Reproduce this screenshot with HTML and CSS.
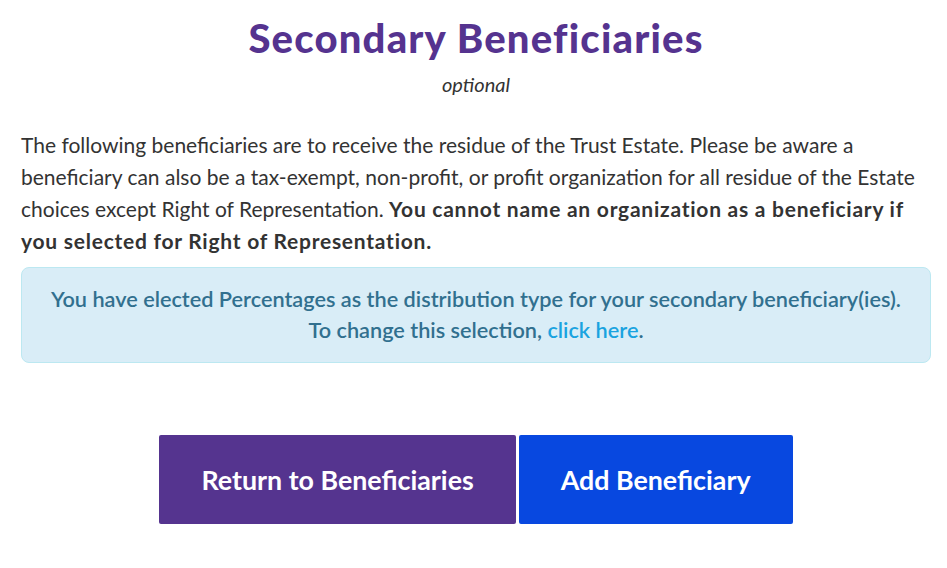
FILE: index.html
```html
<!DOCTYPE html>
<html lang="en">
<head>
  <meta charset="UTF-8" />
  <title>Secondary Beneficiaries</title>
  <link rel="stylesheet" href="styles.css">
</head>
<body>
  <div class="page">
    <h1 class="title">Secondary Beneficiaries</h1>
    <p class="subtitle">optional</p>

    <p class="intro">
      The following beneficiaries are to receive the residue of the Trust Estate. Please be aware a
      beneficiary can also be a tax-exempt, non-profit, or profit organization for all residue of the Estate
      choices except Right of Representation. <strong>You cannot name an organization as a beneficiary if
      you selected for Right of Representation.</strong>
    </p>

    <div class="alert">
      You have elected Percentages as the distribution type for your secondary beneficiary(ies).<br>
      To change this selection, <a href="#">click here</a>.
    </div>

    <div class="actions">
      <button class="btn btn-return">Return to Beneficiaries</button>
      <button class="btn btn-add">Add Beneficiary</button>
    </div>
  </div>
</body>
</html>
```

FILE: styles.css
```css
* {
  box-sizing: border-box;
}

body {
  margin: 0;
  background: #fff;
  color: #333;
  font-family: "Lato", "Liberation Sans", sans-serif;
}

.page {
  width: 910px;
  margin: 0 0 0 21px;
  padding-top: 14px;
}

.title {
  margin: 0;
  text-align: center;
  font-size: 40px;
  font-weight: 900;
  letter-spacing: 1.2px;
  line-height: 48px;
  color: #55338f;
}

.subtitle {
  margin: 10px 0 0;
  text-align: center;
  font-style: italic;
  font-size: 20px;
  line-height: 24px;
  color: #333;
}

.intro {
  margin: 33px 0 0;
  font-size: 21px;
  line-height: 32px;
  color: #333;
}

.intro strong {
  font-weight: 700;
  letter-spacing: 0.75px;
}

.alert {
  margin-top: 10px;
  padding: 16px 10px;
  background: #d9edf7;
  border: 1px solid #bce8f1;
  border-radius: 8px;
  color: #31708f;
  text-align: center;
  font-size: 21.7px;
  font-weight: 600;
  line-height: 31px;
}

.alert a {
  color: #1aa3e0;
  text-decoration: none;
}

.actions {
  display: flex;
  justify-content: center;
  gap: 3px;
  margin-top: 72px;
}

.btn {
  height: 89px;
  padding: 0 42px;
  border: none;
  border-radius: 2px;
  color: #fff;
  font-family: inherit;
  font-size: 26.8px;
  font-weight: 700;
  cursor: pointer;
}

.btn-return {
  background: #55348f;
}

.btn-add {
  background: #0848e0;
}
```
